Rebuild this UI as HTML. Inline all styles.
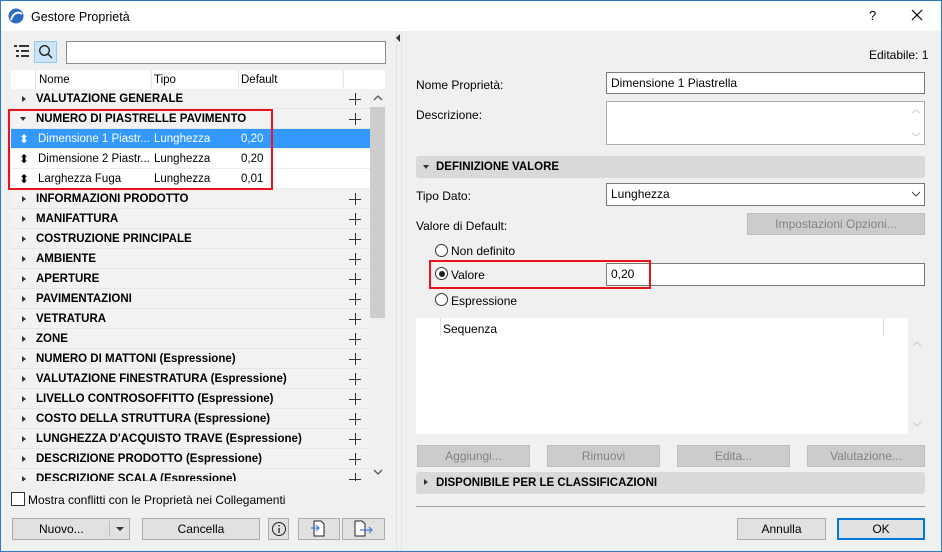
<!DOCTYPE html>
<html><head><meta charset="utf-8"><style>
*{box-sizing:border-box;margin:0;padding:0}
body{width:942px;height:552px;overflow:hidden;font-family:"Liberation Sans",sans-serif;font-size:12px;color:#000;background:#f0f0f0;position:relative}
.a{position:absolute}
.win{left:0;top:0;width:942px;height:552px;border:1px solid #2b7bc9;background:#f0f0f0}
.title{left:1px;top:1px;width:940px;height:30px;background:#fff}
.row{position:absolute;left:11px;width:359px;height:20px;background:#f2f2f2;border-bottom:1px solid #e6e6e6;font-weight:bold;font-size:11.5px;line-height:21px}
.row .t{position:absolute;left:25px}
.row .tri{position:absolute;left:11px;top:7px;width:0;height:0;border-left:4px solid #333;border-top:3.5px solid transparent;border-bottom:3.5px solid transparent}
.row .pl{position:absolute;left:338px;top:4px;width:12px;height:12px}
.row .pl:before{content:"";position:absolute;left:0;top:5.5px;width:12px;height:1px;background:#333}
.row .pl:after{content:"";position:absolute;left:5.5px;top:0;width:1px;height:12px;background:#333}
.d{position:absolute;left:11px;width:359px;height:20px;background:#fff;border-bottom:1px solid #ececec;line-height:21px;font-size:11.5px}
.d span{position:absolute}
.btn{position:absolute;height:22px;background:#e1e1e1;border:1px solid #adadad;text-align:center;line-height:21px;font-size:12px}
.dis{background:#cccccc;border-color:#bfbfbf;color:#838383}
.inp{position:absolute;background:#fff;border:1px solid #7a7a7a;padding-left:4px;line-height:21px}
.radio{position:absolute;width:13px;height:13px;border:1px solid #333;border-radius:50%;background:#fff}
.sec{position:absolute;left:416px;width:509px;height:22px;background:#d9d9d9;border-radius:3px;font-weight:bold;font-size:11.5px;line-height:23px;padding-left:20px}
</style></head><body>
<div class="a win"></div>
<div class="a title"></div>
<svg class="a" style="left:8px;top:8px" width="16" height="16" viewBox="0 0 16 16"><circle cx="8" cy="8" r="7.5" fill="#2a6bc4"/><path d="M3 12 C5 5 10 3 14 6" stroke="#fff" stroke-width="2" fill="none"/></svg>
<div class="a" style="left:31px;top:10px;font-size:12.5px">Gestore Proprietà</div>
<div class="a" style="left:869px;top:8px;font-size:13px">?</div>
<svg class="a" style="left:911px;top:9px" width="12" height="12"><path d="M1 1L11 11M11 1L1 11" stroke="#000" stroke-width="1.2"/></svg>

<svg class="a" style="left:14px;top:44px" width="16" height="14"><g fill="#333"><rect x="0" y="1" width="3" height="2"/><rect x="5" y="1" width="10" height="2"/><rect x="2" y="6" width="3" height="2"/><rect x="7" y="6" width="8" height="2"/><rect x="2" y="11" width="3" height="2"/><rect x="7" y="11" width="8" height="2"/></g></svg>
<div class="a" style="left:34px;top:41px;width:23px;height:22px;background:#cce4f7;border:1px solid #99c9ef"></div>
<svg class="a" style="left:38px;top:44px" width="16" height="16"><circle cx="6.5" cy="6.5" r="4.8" stroke="#222" stroke-width="1.3" fill="none"/><path d="M10 10L14 14" stroke="#222" stroke-width="1.5"/></svg>
<div class="inp" style="left:66px;top:41px;width:320px;height:23px;border-color:#8a8a8a"></div>

<div class="a" style="left:11px;top:70px;width:359px;height:19px;background:#fff"></div>
<div class="a" style="left:370px;top:70px;width:15px;height:19px;background:#fff"></div>
<div class="a" style="left:35px;top:70px;width:1px;height:19px;background:#e5e5e5"></div>
<div class="a" style="left:151px;top:70px;width:1px;height:19px;background:#e5e5e5"></div>
<div class="a" style="left:238px;top:70px;width:1px;height:19px;background:#e5e5e5"></div>
<div class="a" style="left:343px;top:70px;width:1px;height:19px;background:#e5e5e5"></div>
<div class="a" style="left:39px;top:74px;font-size:11.5px">Nome</div>
<div class="a" style="left:154px;top:74px;font-size:11.5px">Tipo</div>
<div class="a" style="left:241px;top:74px;font-size:11.5px">Default</div>

<div class="row" style="top:89px"><i class="tri"></i><span class="t">VALUTAZIONE GENERALE</span><i class="pl"></i></div>
<div class="row" style="top:109px"><i class="a" style="left:9px;top:8px;border-top:4px solid #333;border-left:3.5px solid transparent;border-right:3.5px solid transparent"></i><span class="t">NUMERO DI PIASTRELLE PAVIMENTO</span><i class="pl"></i></div>
<div class="d" style="top:129px;background:#3399ff;color:#fff"><span style="left:8px;top:0;font-size:12px">⬍</span><span style="left:27px">Dimensione 1 Piastr...</span><span style="left:143px">Lunghezza</span><span style="left:230px">0,20</span></div>
<div class="d" style="top:149px"><span style="left:8px;top:0;font-size:12px">⬍</span><span style="left:27px">Dimensione 2 Piastr...</span><span style="left:143px">Lunghezza</span><span style="left:230px">0,20</span></div>
<div class="d" style="top:169px"><span style="left:8px;top:0;font-size:12px">⬍</span><span style="left:27px">Larghezza Fuga</span><span style="left:143px">Lunghezza</span><span style="left:230px">0,01</span></div>
<div class="row" style="top:189px"><i class="tri"></i><span class="t">INFORMAZIONI PRODOTTO</span><i class="pl"></i></div>
<div class="row" style="top:209px"><i class="tri"></i><span class="t">MANIFATTURA</span><i class="pl"></i></div>
<div class="row" style="top:229px"><i class="tri"></i><span class="t">COSTRUZIONE PRINCIPALE</span><i class="pl"></i></div>
<div class="row" style="top:249px"><i class="tri"></i><span class="t">AMBIENTE</span><i class="pl"></i></div>
<div class="row" style="top:269px"><i class="tri"></i><span class="t">APERTURE</span><i class="pl"></i></div>
<div class="row" style="top:289px"><i class="tri"></i><span class="t">PAVIMENTAZIONI</span><i class="pl"></i></div>
<div class="row" style="top:309px"><i class="tri"></i><span class="t">VETRATURA</span><i class="pl"></i></div>
<div class="row" style="top:329px"><i class="tri"></i><span class="t">ZONE</span><i class="pl"></i></div>
<div class="row" style="top:349px"><i class="tri"></i><span class="t">NUMERO DI MATTONI (Espressione)</span><i class="pl"></i></div>
<div class="row" style="top:369px"><i class="tri"></i><span class="t">VALUTAZIONE FINESTRATURA (Espressione)</span><i class="pl"></i></div>
<div class="row" style="top:389px"><i class="tri"></i><span class="t">LIVELLO CONTROSOFFITTO (Espressione)</span><i class="pl"></i></div>
<div class="row" style="top:409px"><i class="tri"></i><span class="t">COSTO DELLA STRUTTURA (Espressione)</span><i class="pl"></i></div>
<div class="row" style="top:429px"><i class="tri"></i><span class="t">LUNGHEZZA D'ACQUISTO TRAVE (Espressione)</span><i class="pl"></i></div>
<div class="row" style="top:449px"><i class="tri"></i><span class="t">DESCRIZIONE PRODOTTO (Espressione)</span><i class="pl"></i></div>
<div class="a" style="left:11px;top:469px;width:359px;height:12px;overflow:hidden"><div class="row" style="top:0;left:0"><i class="tri"></i><span class="t">DESCRIZIONE SCALA (Espressione)</span><i class="pl"></i></div></div>

<div class="a" style="left:370px;top:89px;width:15px;height:392px;background:#f0f0f0"></div>
<div class="a" style="left:370px;top:107px;width:15px;height:211px;background:#cdcdcd"></div>
<svg class="a" style="left:373px;top:94px" width="10" height="8"><path d="M1 6L5 2L9 6" stroke="#555" stroke-width="1.3" fill="none"/></svg>
<svg class="a" style="left:373px;top:468px" width="10" height="8"><path d="M1 2L5 6L9 2" stroke="#555" stroke-width="1.3" fill="none"/></svg>

<div class="a" style="left:8px;top:109px;width:265px;height:81px;border:2px solid #e8141c"></div>

<div class="a" style="left:11px;top:492px;width:14px;height:14px;border:1px solid #333;background:#fff"></div>
<div class="a" style="left:28px;top:493px;font-size:12px">Mostra conflitti con le Proprietà nei Collegamenti</div>

<div class="btn" style="left:12px;top:518px;width:118px"><span style="position:absolute;left:26px">Nuovo...</span><span style="position:absolute;left:96px;top:2px;width:1px;height:16px;background:#bbb"></span><span style="position:absolute;left:103px;top:8px;border-top:4px solid #333;border-left:4px solid transparent;border-right:4px solid transparent"></span></div>
<div class="btn" style="left:142px;top:518px;width:118px">Cancella</div>
<div class="btn" style="left:268px;top:518px;width:21px"></div>
<svg class="a" style="left:271px;top:521px" width="16" height="16"><circle cx="8" cy="8" r="6.5" stroke="#222" fill="none"/><rect x="7.4" y="7" width="1.3" height="5" fill="#222"/><rect x="7.4" y="4" width="1.3" height="1.4" fill="#222"/></svg>
<div class="btn" style="left:298px;top:518px;width:42px"></div>
<svg class="a" style="left:310px;top:520px" width="18" height="18"><path d="M4 1H11L14 4V16H4Z" stroke="#222" fill="#fff"/><path d="M1 8H9M6 5L9 8L6 11" stroke="#3a7de0" stroke-width="1.2" fill="none"/></svg>
<div class="btn" style="left:342px;top:518px;width:43px"></div>
<svg class="a" style="left:354px;top:520px" width="20" height="18"><path d="M1 1H8L11 4V16H1Z" stroke="#222" fill="#fff"/><path d="M6 10H18M15 7L18 10L15 13" stroke="#3a7de0" stroke-width="1.2" fill="none"/></svg>

<div class="a" style="left:396px;top:31px;width:1px;height:520px;background:#e3e3e3"></div>
<div class="a" style="left:401px;top:31px;width:1px;height:520px;background:#e3e3e3"></div>
<div class="a" style="left:396px;top:34px;border-right:4px solid #333;border-top:4px solid transparent;border-bottom:4px solid transparent"></div>

<div class="a" style="left:869px;top:48px">Editabile: 1</div>
<div class="a" style="left:416px;top:78px">Nome Proprietà:</div>
<div class="inp" style="left:606px;top:72px;width:319px;height:22px">Dimensione 1 Piastrella</div>
<div class="a" style="left:416px;top:108px">Descrizione:</div>
<div class="inp" style="left:606px;top:101px;width:319px;height:44px;border-color:#aaa"></div>
<svg class="a" style="left:911px;top:108px" width="10" height="30"><path d="M1 5L5 2L9 5M1 25L5 28L9 25" stroke="#ccc" fill="none"/></svg>

<div class="sec" style="top:156px">DEFINIZIONE VALORE<i class="a" style="left:7px;top:9px;border-top:4px solid #333;border-left:3.5px solid transparent;border-right:3.5px solid transparent"></i></div>
<div class="a" style="left:416px;top:189px">Tipo Dato:</div>
<div class="inp" style="left:606px;top:183px;width:319px;height:23px">Lunghezza</div>
<svg class="a" style="left:911px;top:191px" width="10" height="7"><path d="M1 1L5 5L9 1" stroke="#444" fill="none"/></svg>
<div class="a" style="left:416px;top:219px">Valore di Default:</div>
<div class="btn dis" style="left:747px;top:213px;width:178px;height:22px">Impostazioni Opzioni...</div>
<div class="radio" style="left:435px;top:244px"></div>
<div class="a" style="left:451px;top:244px">Non definito</div>
<div class="radio" style="left:435px;top:267px"><i class="a" style="left:2.5px;top:2.5px;width:6px;height:6px;border-radius:50%;background:#222"></i></div>
<div class="a" style="left:451px;top:268px">Valore</div>
<div class="inp" style="left:606px;top:263px;width:319px;height:23px">0,20</div>
<div class="a" style="left:429px;top:260px;width:222px;height:29px;border:2px solid #e8141c"></div>
<div class="radio" style="left:435px;top:293px"></div>
<div class="a" style="left:451px;top:294px">Espressione</div>

<div class="a" style="left:416px;top:318px;width:492px;height:116px;background:#fff"></div>
<div class="a" style="left:440px;top:318px;width:1px;height:18px;background:#ddd"></div>
<div class="a" style="left:883px;top:318px;width:1px;height:18px;background:#ddd"></div>
<div class="a" style="left:443px;top:322px">Sequenza</div>
<svg class="a" style="left:912px;top:340px" width="10" height="90"><path d="M1 6L5 2L9 6M1 82L5 86L9 82" stroke="#ccc" fill="none"/></svg>

<div class="btn dis" style="left:417px;top:445px;width:113px">Aggiungi...</div>
<div class="btn dis" style="left:547px;top:445px;width:113px">Rimuovi</div>
<div class="btn dis" style="left:677px;top:445px;width:113px">Edita...</div>
<div class="btn dis" style="left:807px;top:445px;width:118px">Valutazione...</div>

<div class="sec" style="top:472px">DISPONIBILE PER LE CLASSIFICAZIONI<i class="a" style="left:8px;top:7px;border-left:4px solid #333;border-top:3.5px solid transparent;border-bottom:3.5px solid transparent"></i></div>
<div class="a" style="left:416px;top:506px;width:509px;height:1px;background:#a0a0a0"></div>
<div class="btn" style="left:737px;top:518px;width:89px">Annulla</div>
<div class="btn" style="left:837px;top:518px;width:88px;border:2px solid #0078d7;line-height:19px">OK</div>
</body></html>
